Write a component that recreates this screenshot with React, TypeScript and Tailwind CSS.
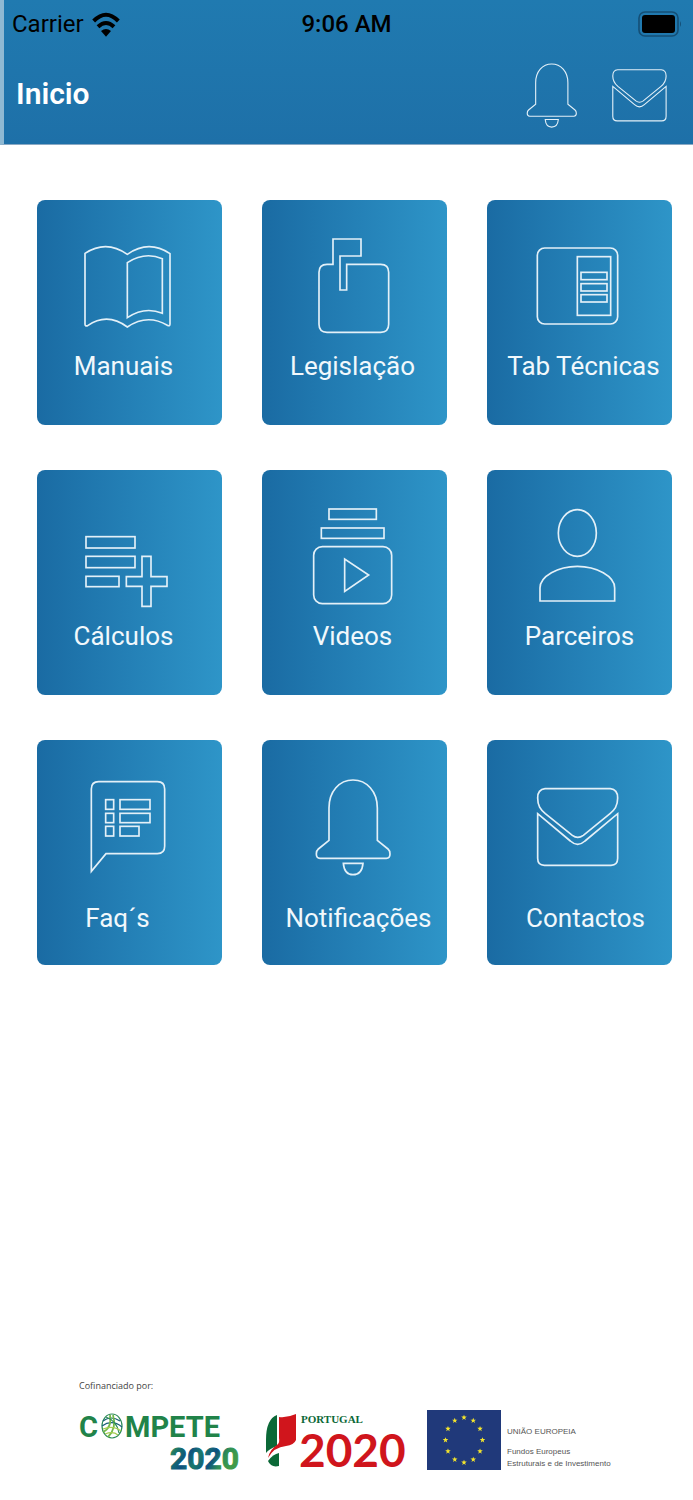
import type { ReactNode } from "react"

function Drawing({
  className,
  stroke = 5,
  children,
}: {
  className: string
  stroke?: number
  children: ReactNode
}) {
  return (
    <svg
      viewBox="0 0 360 360"
      fill="none"
      stroke="#e3f0f8"
      strokeWidth={stroke}
      aria-hidden="true"
      className={className}
    >
      {children}
    </svg>
  )
}

const book = (
  <>
    <path d="M45 76Q109 34 172 79Q236 34 300 77V288Q300 296 292 292Q232 256 172 297Q112 252 53 293Q45 296 45 288Z" />
    <path d="M172 104Q224 70 277 92V256Q224 234 172 269Z" />
  </>
)

const mailbox = (
  <path d="M114 109V33H198V84H135V186H155V109H257Q281 109 281 133V289Q281 313 257 313H96Q72 313 72 289V133Q72 109 96 109Z" />
)

const table = (
  <>
    <rect x="52" y="60" width="241" height="228" rx="22" />
    <rect x="172" y="86" width="100" height="176" />
    <rect x="183" y="133" width="78" height="22" />
    <rect x="183" y="167" width="78" height="22" />
    <rect x="183" y="200" width="78" height="22" />
  </>
)

const listPlus = (
  <>
    <rect x="48" y="116" width="147" height="34" />
    <rect x="48" y="175" width="147" height="34" />
    <rect x="48" y="235" width="99" height="31" />
    <path d="M216 175H243V236H291V265H243V325H216V265H169V236H216Z" />
  </>
)

const video = (
  <>
    <rect x="102" y="33" width="142" height="31" />
    <rect x="79" y="90" width="188" height="31" />
    <rect x="56" y="146" width="234" height="171" rx="26" />
    <path d="M149 183V280L221 231Z" />
  </>
)

const person = (
  <>
    <ellipse cx="172" cy="105" rx="57" ry="70" />
    <path d="M60 309H284V270C284 235 230 205 172 205C114 205 60 235 60 270Z" />
  </>
)

const speech = (
  <>
    <path d="M64 310V63Q64 41 86 41H262Q284 41 284 63V235Q284 257 262 257H108Z" />
    <rect x="107" y="95" width="24" height="29" />
    <rect x="107" y="136" width="24" height="28" />
    <rect x="107" y="175" width="24" height="29" />
    <rect x="150" y="95" width="90" height="29" />
    <rect x="150" y="136" width="90" height="28" />
    <rect x="150" y="175" width="57" height="29" />
  </>
)

const bell = (
  <>
    <path d="M102 217V120C102 70 133 36 174 36S247 70 247 120V217L279 243Q285 248 285 258Q285 271 274 271H75Q64 271 64 258Q64 248 70 243Z" />
    <path d="M145 286H204Q201 320 174 320Q148 320 145 286Z" />
  </>
)

const envelope = (
  <>
    <path d="M75 62H271Q293 64 293 90C293 115 283 126 270 137L190 202Q173 214 157 202L76 137C61 124 53 113 53 90Q53 64 75 62Z" />
    <path d="M53 137L151 219Q173 239 195 219L293 137V271Q293 292 273 292H73Q53 292 53 271Z" />
  </>
)

const rows = [
  {
    labelTop: "mt-0",
    tiles: [
      { label: "Manuais", icon: book, shift: "pr-3" },
      { label: "Legislação", icon: mailbox, shift: "pr-1" },
      { label: "Tab Técnicas", icon: table, shift: "pl-2" },
    ],
  },
  {
    labelTop: "mt-0",
    tiles: [
      { label: "Cálculos", icon: listPlus, shift: "pr-3" },
      { label: "Videos", icon: video, shift: "pr-1" },
      { label: "Parceiros", icon: person, shift: "px-0" },
    ],
  },
  {
    labelTop: "mt-3",
    tiles: [
      { label: "Faq´s", icon: speech, shift: "pr-6" },
      { label: "Notificações", icon: bell, shift: "pl-2" },
      { label: "Contactos", icon: envelope, shift: "pl-3" },
    ],
  },
]

const starAngles = [0, 30, 60, 90, 120, 150, 180, 210, 240, 270, 300, 330]

function StatusBar() {
  return (
    <div className="grid h-12 grid-cols-3 items-center pr-3 pl-2 text-2xl text-black">
      <div className="flex items-center gap-2">
        <span>Carrier</span>
        <svg viewBox="0 0 84 75" className="h-[25px] w-7" aria-hidden="true">
          <g fill="none" stroke="currentColor" strokeWidth="12">
            <path d="M5 27Q42 -10 79 27" />
            <path d="M18 44Q42 22 66 44" />
          </g>
          <path d="M27 57Q42 45 57 57L42 74Z" fill="currentColor" />
        </svg>
      </div>
      <span className="text-center font-medium">9:06 AM</span>
      <svg viewBox="0 0 44 26" className="h-[26px] w-11 justify-self-end" aria-hidden="true">
        <rect x="2" y="1" width="39" height="24" rx="6" fill="none" stroke="#144f76" strokeWidth="1.6" />
        <rect x="5" y="4" width="33" height="18" rx="3" fill="#000" />
        <path d="M43 10Q45 13 43 16Z" fill="#144f76" />
      </svg>
    </div>
  )
}

function Compete() {
  return (
    <svg viewBox="0 0 162 68" className="h-[68px] w-[162px] shrink-0" role="img">
      <defs>
        <linearGradient id="years" x1="0" y1="0" x2="1" y2="0.3">
          <stop offset="0" stopColor="#3f9a4a" />
          <stop offset="0.18" stopColor="#17706a" />
          <stop offset="0.35" stopColor="#0d5080" />
          <stop offset="0.5" stopColor="#1b7a6b" />
          <stop offset="0.7" stopColor="#0d5080" />
          <stop offset="0.85" stopColor="#2f8f55" />
          <stop offset="1" stopColor="#3f9a4a" />
        </linearGradient>
      </defs>
      <g className="font-['Roboto',sans-serif] font-bold">
        <text x="0" y="27" fontSize="29" fill="#218349">C</text>
        <text x="46" y="27" fontSize="29" fill="#218349">MPETE</text>
        <text x="91" y="59" fontSize="30" fill="url(#years)" stroke="url(#years)">2020</text>
      </g>
      <g fill="none" strokeWidth="1.2">
        <ellipse cx="33" cy="16" rx="10" ry="12" stroke="#2c8a58" />
        <path d="M24 11Q32 5 41 11M23 16Q33 9 43 17" stroke="#185f78" />
        <path d="M24 22Q33 18 31 5M29 27Q38 18 34 5" stroke="#72b84a" strokeWidth="1.8" />
        <path d="M27 7Q38 11 40 23" stroke="#2c8a58" />
        <path d="M24 19Q34 15 42 21M26 24Q34 21 39 25" stroke="#a4cc4d" />
      </g>
    </svg>
  )
}

function Portugal() {
  return (
    <svg viewBox="0 0 142 68" className="h-[68px] w-[142px] shrink-0" role="img">
      <path d="M12 5Q1 9 1 30V43Q4 39 12 36Z" fill="#0b6837" />
      <path d="M14 7Q22 8 31 4V30Q29 35 21 36Q9 37 3 48Q5 39 12 35Q15 33 14 28Z" fill="#d0151c" />
      <path d="M3 51Q8 44 14 43V56Q6 58 3 51Z" fill="#0b6837" />
      <text
        x="36"
        y="13"
        fontSize="11"
        fill="#0b6837"
        className="font-['Liberation_Serif',serif] font-bold"
      >
        PORTUGAL
      </text>
      <text
        x="34"
        y="57"
        fontSize="46"
        fill="#d0151c"
        className="font-['Lato',sans-serif] font-bold"
      >
        2020
      </text>
    </svg>
  )
}

function EuropeanUnion() {
  return (
    <div className="flex items-start gap-1.5">
      <svg viewBox="0 0 74 60" className="h-[60px] w-[74px] shrink-0" aria-hidden="true">
        <rect width="74" height="60" fill="#20397a" />
        {starAngles.map((angle) => {
          const x = 37 + 18.5 * Math.sin((angle * Math.PI) / 180)
          const y = 30 - 22.5 * Math.cos((angle * Math.PI) / 180)
          return (
            <path
              key={angle}
              transform={`translate(${x} ${y}) scale(1.1)`}
              d="M0 -2.6L.7 -.8H2.5L1 .4L1.6 2.3L0 1.1L-1.6 2.3L-1 .4L-2.5 -.8H-.7Z"
              fill="#f4e52c"
            />
          )
        })}
      </svg>
      <div className="pt-4 font-['Liberation_Sans',sans-serif] text-[8px] leading-3 whitespace-nowrap text-[#555]">
        <p>UNIÃO EUROPEIA</p>
        <p className="mt-2">Fundos Europeus</p>
        <p>Estruturais e de Investimento</p>
      </div>
    </div>
  )
}

export default function App() {
  return (
    <div className="flex min-h-screen flex-col bg-white font-['Roboto',sans-serif]">
      <header className="border-b border-l-4 border-b-[#8aa9c4] border-l-[#8fb9d3] bg-linear-to-b from-[#207ab0] to-[#1e70a8]">
        <StatusBar />
        <div className="flex items-start justify-between py-2 pr-3 pl-3">
          <h1 className="pt-4 text-3xl leading-11 font-semibold text-white">Inicio</h1>
          <div className="flex gap-2">
            <button type="button" aria-label="Notificações">
              <Drawing className="size-20">{bell}</Drawing>
            </button>
            <button type="button" aria-label="Contactos">
              <Drawing className="size-20">{envelope}</Drawing>
            </button>
          </div>
        </div>
      </header>

      <main className="flex flex-col gap-[45px] pt-[55px] pr-[21px] pl-[37px]">
        {rows.map((row) => (
          <div key={row.tiles[0].label} className="grid grid-cols-3 gap-10">
            {row.tiles.map((tile) => (
              <button
                key={tile.label}
                type="button"
                className="flex h-[225px] flex-col items-center rounded-lg bg-linear-to-r from-[#1a6ba3] via-[#2480b6] to-[#2e95c8] pt-7"
              >
                <Drawing className="size-[120px]">{tile.icon}</Drawing>
                <span
                  className={`${row.labelTop} ${tile.shift} text-[26px] leading-9 whitespace-nowrap text-[#f1f8fc]`}
                >
                  {tile.label}
                </span>
              </button>
            ))}
          </div>
        ))}
      </main>

      <footer className="mt-auto pb-[22px] pl-[79px]">
        <p className="font-['Open_Sans',sans-serif] text-[9px] leading-4 text-[#444]">
          Cofinanciado por:
        </p>
        <div className="mt-4 flex items-start">
          <Compete />
          <div className="ml-6 flex items-start gap-5">
            <Portugal />
            <EuropeanUnion />
          </div>
        </div>
      </footer>
    </div>
  )
}
